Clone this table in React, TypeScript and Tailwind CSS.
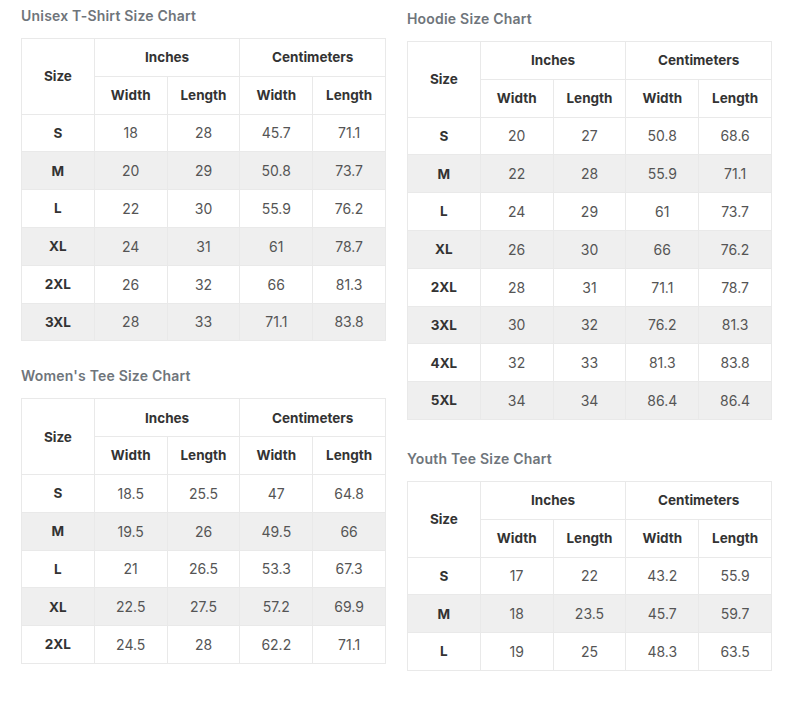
import React from "react";

type Row = [string, string, string, string, string];

interface ChartProps {
  title: string;
  rows: Row[];
  className?: string;
}

const unisex: Row[] = [
  ["S", "18", "28", "45.7", "71.1"],
  ["M", "20", "29", "50.8", "73.7"],
  ["L", "22", "30", "55.9", "76.2"],
  ["XL", "24", "31", "61", "78.7"],
  ["2XL", "26", "32", "66", "81.3"],
  ["3XL", "28", "33", "71.1", "83.8"],
];

const womens: Row[] = [
  ["S", "18.5", "25.5", "47", "64.8"],
  ["M", "19.5", "26", "49.5", "66"],
  ["L", "21", "26.5", "53.3", "67.3"],
  ["XL", "22.5", "27.5", "57.2", "69.9"],
  ["2XL", "24.5", "28", "62.2", "71.1"],
];

const hoodie: Row[] = [
  ["S", "20", "27", "50.8", "68.6"],
  ["M", "22", "28", "55.9", "71.1"],
  ["L", "24", "29", "61", "73.7"],
  ["XL", "26", "30", "66", "76.2"],
  ["2XL", "28", "31", "71.1", "78.7"],
  ["3XL", "30", "32", "76.2", "81.3"],
  ["4XL", "32", "33", "81.3", "83.8"],
  ["5XL", "34", "34", "86.4", "86.4"],
];

const youth: Row[] = [
  ["S", "17", "22", "43.2", "55.9"],
  ["M", "18", "23.5", "45.7", "59.7"],
  ["L", "19", "25", "48.3", "63.5"],
];

const cell = "border border-[#e9e9e9] h-[37.8px] p-0 text-center align-middle";
const head = `${cell} font-bold text-[#333] text-[13.5px]`;

function SizeChart({ title, rows, className }: ChartProps) {
  return (
    <div className={className}>
      <h2 className="h-5 text-[14px] leading-5 font-semibold text-[#6f757b] tracking-[0.2px] mb-3">
        {title}
      </h2>
      <table className="border-collapse table-fixed w-[364px] text-[14px]">
        <colgroup>
          <col className="w-[72.8px]" />
          <col className="w-[72.8px]" />
          <col className="w-[72.8px]" />
          <col className="w-[72.8px]" />
          <col className="w-[72.8px]" />
        </colgroup>
        <thead>
          <tr>
            <th rowSpan={2} className={head}>
              Size
            </th>
            <th colSpan={2} className={head}>
              Inches
            </th>
            <th colSpan={2} className={head}>
              Centimeters
            </th>
          </tr>
          <tr>
            <th className={head}>Width</th>
            <th className={head}>Length</th>
            <th className={head}>Width</th>
            <th className={head}>Length</th>
          </tr>
        </thead>
        <tbody>
          {rows.map((row, i) => (
            <tr key={row[0]} className={i % 2 === 1 ? "bg-[#efefef]" : "bg-white"}>
              <td className={head}>{row[0]}</td>
              {row.slice(1).map((v, j) => (
                <td key={j} className={`${cell} text-[#555]`}>
                  {v}
                </td>
              ))}
            </tr>
          ))}
        </tbody>
      </table>
    </div>
  );
}

export default function App() {
  return (
    <div
      className="w-[794px] h-[712px] bg-white flex gap-[21px] pl-[21px]"
      style={{ fontFamily: "Inter, 'Open Sans', sans-serif" }}
    >
      <div className="pt-[6px]">
        <SizeChart title="Unisex T-Shirt Size Chart" rows={unisex} />
        <SizeChart title="Women's Tee Size Chart" rows={womens} className="mt-[25px]" />
      </div>
      <div className="pt-[9px]">
        <SizeChart title="Hoodie Size Chart" rows={hoodie} />
        <SizeChart title="Youth Tee Size Chart" rows={youth} className="mt-[29px]" />
      </div>
    </div>
  );
}
